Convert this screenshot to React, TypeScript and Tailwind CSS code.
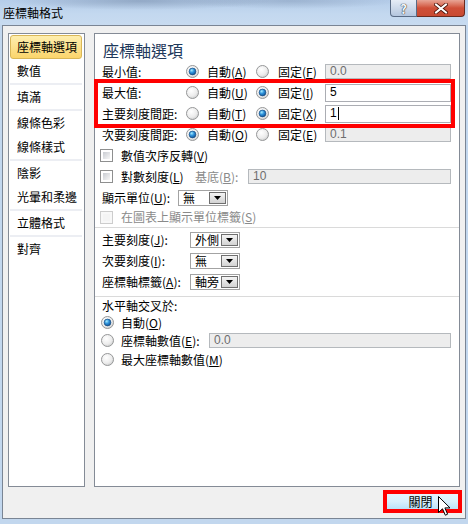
import React from "react";

const K = ({ c }: { c: string }) => (
  <>
    (<span className="underline underline-offset-[1px]">{c}</span>)
  </>
);

const Radio = ({ on }: { on?: boolean }) => (
  <svg width="13" height="13" viewBox="0 0 13 13" className="shrink-0">
    <defs>
      <radialGradient id="rOff" cx="0.4" cy="0.35" r="0.75">
        <stop offset="0" stopColor="#ffffff" />
        <stop offset="0.6" stopColor="#ececec" />
        <stop offset="1" stopColor="#c4c5c6" />
      </radialGradient>
      <radialGradient id="rOn" cx="0.38" cy="0.32" r="0.75">
        <stop offset="0" stopColor="#a6ecff" />
        <stop offset="0.45" stopColor="#2f93dc" />
        <stop offset="1" stopColor="#0c4a8a" />
      </radialGradient>
    </defs>
    <circle cx="6.5" cy="6.5" r="6" fill="url(#rOff)" stroke="#969798" />
    {on && <circle cx="6.5" cy="6.5" r="3.4" fill="url(#rOn)" stroke="#1b4d82" strokeWidth="0.7" />}
  </svg>
);

const Check = ({ disabled }: { disabled?: boolean }) => (
  <span
    className={
      disabled
        ? "flex h-[13px] w-[13px] shrink-0 border border-[#cdcdcd] bg-[#f8f8f8] p-[2px]"
        : "flex h-[13px] w-[13px] shrink-0 border border-[#8e8f8f] bg-white p-[2px]"
    }
  >
    <span
      className={
        disabled ? "flex-1 bg-[#f4f4f4]" : "flex-1 bg-gradient-to-br from-[#c9ccd2] to-[#f7f7f7]"
      }
    />
  </span>
);

const Field = ({ value, w, enabled, caret }: { value: string; w: string; enabled?: boolean; caret?: boolean }) => (
  <div
    className={
      enabled
        ? `flex h-[18px] items-center border border-[#abadb3] bg-white pl-[4px] text-black ${w}`
        : `flex h-[15px] items-center border border-[#b5b9bd] bg-[#ededed] pl-[4px] text-[#6d6d6d] ${w}`
    }
  >
    <span className="font-['Liberation_Sans',sans-serif] text-[12px] leading-[13px]">{value}</span>
    {caret && <span className="ml-px h-[13px] w-px bg-black" />}
  </div>
);

const Combo = ({ text }: { text: string }) => (
  <div className="flex h-[16px] w-[50px] border border-[#a3a3a3] bg-white p-px">
    <span className="flex-1 pl-[3px] leading-[12px]">{text}</span>
    <span className="flex w-[17px] items-center justify-center border border-[#6f6f6f] bg-gradient-to-b from-[#f4f4f4] to-[#d3d3d3]">
      <svg width="7" height="4" viewBox="0 0 7 4">
        <path d="M0 0H7L3.5 4Z" fill="#000" />
      </svg>
    </span>
  </div>
);

const AxisRow = ({
  label,
  a,
  f,
  auto,
  value,
}: {
  label: string;
  a: string;
  f: string;
  auto: boolean;
  value: string;
}) => (
  <div className="flex h-[21px] items-center pl-[7px]">
    <span className="w-[84px] leading-[14px]">{label}</span>
    <span className="flex w-[70px] items-center gap-[8px]">
      <Radio on={auto} />
      <span className="leading-[14px]">
        自動<K c={a} />
      </span>
    </span>
    <span className="flex w-[69px] items-center gap-[9px]">
      <Radio on={!auto} />
      <span className="leading-[14px]">
        固定<K c={f} />
      </span>
    </span>
    <Field value={value} w="w-[126px]" enabled={!auto} caret={value === "1"} />
  </div>
);

const navGroups = [
  ["座標軸選項", "數值"],
  ["填滿"],
  ["線條色彩", "線條樣式"],
  ["陰影", "光暈和柔邊"],
  ["立體格式"],
  ["對齊"],
];

export default function App() {
  return (
    <div className="relative flex h-[524px] w-[468px] flex-col overflow-hidden bg-[#c2d7ee] font-['Noto_Sans_CJK_TC',sans-serif] text-[12px] text-black">
      {/* title bar */}
      <div className="flex h-[25px] justify-between bg-[radial-gradient(ellipse_130px_9px_at_140px_1px,rgba(80,100,130,0.35),transparent),radial-gradient(ellipse_110px_8px_at_290px_1px,rgba(80,100,130,0.25),transparent),linear-gradient(180deg,#b5cdea_0%,#c3d8ef_55%,#c8dbf0_100%)]">
        <span className="pl-[3px] pt-[5px] leading-[15px]">座標軸格式</span>
        <div className="mr-[3px] flex h-[17px]">
          <div className="flex w-[27px] items-center justify-center rounded-bl-[4px] border border-t-0 border-[#596b85] bg-gradient-to-b from-[#e6edf6] to-[#b4c6de] text-[13px] font-bold leading-[13px] text-[#f5f7fa] [text-shadow:0_0_1px_#222,0_0_1px_#222]">
            ?
          </div>
          <div className="flex w-[48px] items-center justify-center rounded-br-[4px] border border-l-0 border-t-0 border-[#6b2a1e] bg-gradient-to-b from-[#e8a596] via-[#cf4f38] to-[#c84a32]">
            <svg width="14" height="11" viewBox="0 0 14 11">
              <path d="M2 1.5L12 9.5M12 1.5L2 9.5" stroke="#4a1208" strokeWidth="3.6" strokeLinecap="square" />
              <path d="M2 1.5L12 9.5M12 1.5L2 9.5" stroke="#ffffff" strokeWidth="2" strokeLinecap="square" />
            </svg>
          </div>
        </div>
      </div>

      {/* client */}
      <div className="ml-[2px] mr-[2px] h-[494px] border border-[#7a8594] bg-[#f0f0f0] px-[5px] pt-[7px]">
        <div className="flex gap-[9px]">
          {/* nav */}
          <div className="h-[454px] w-[77px] border border-[#848b96] bg-white pl-px pr-[2px] pt-px">
            {navGroups.map((g, gi) => (
              <div key={gi}>
                {gi > 0 && <div className="h-[2px] bg-[#eceef3]" />}
                {g.map((item) =>
                  item === "座標軸選項" ? (
                    <div
                      key={item}
                      className="flex h-[24px] items-center rounded-[3px] border border-[#d9b757] bg-gradient-to-b from-[#feeeae] to-[#fbd56b] pl-[6px] leading-[14px]"
                    >
                      {item}
                    </div>
                  ) : (
                    <div key={item} className="flex h-[24px] items-center pl-[7px] leading-[14px]">
                      {item}
                    </div>
                  )
                )}
              </div>
            ))}
          </div>

          {/* options panel */}
          <div className="relative flex h-[454px] w-[366px] flex-col border border-[#848b96] bg-white">
            <div className="h-[27px] pl-[8px] pt-[6px] text-[16px] leading-[20px] text-[#1e395b]">座標軸選項</div>
            <AxisRow label="最小值:" a="A" f="F" auto value="0.0" />
            <AxisRow label="最大值:" a="U" f="I" auto={false} value="5" />
            <AxisRow label="主要刻度間距:" a="T" f="X" auto={false} value="1" />
            <AxisRow label="次要刻度間距:" a="O" f="E" auto value="0.1" />

            <div className="flex h-[21px] items-center pl-[5px]">
              <Check />
              <span className="ml-[8px] leading-[14px]">
                數值次序反轉<K c="V" />
              </span>
            </div>
            <div className="flex h-[21px] items-center pl-[5px]">
              <Check />
              <span className="ml-[8px] w-[74px] leading-[14px]">
                對數刻度<K c="L" />
              </span>
              <span className="w-[53px] leading-[14px] text-[#8a8a8a]">
                基底<K c="B" />:
              </span>
              <Field value="10" w="w-[203px]" />
            </div>
            <div className="flex h-[21px] items-center pl-[7px]">
              <span className="w-[76px] leading-[14px]">
                顯示單位<K c="U" />:
              </span>
              <Combo text="無" />
            </div>
            <div className="flex h-[18px] items-center pl-[5px]">
              <Check disabled />
              <span className="ml-[8px] leading-[14px] text-[#8a8a8a]">
                在圖表上顯示單位標籤<K c="S" />
              </span>
            </div>

            <div className="flex h-[3px] items-center">
              <div className="h-px flex-1 bg-[#dadada]" />
            </div>

            {[
              ["主要刻度", "J", "外側"],
              ["次要刻度", "I", "無"],
              ["座標軸標籤", "A", "軸旁"],
            ].map(([l, k, v]) => (
              <div key={l} className="flex h-[21px] items-center pl-[7px]">
                <span className="w-[88px] leading-[14px]">
                  {l}
                  <K c={k} />:
                </span>
                <Combo text={v} />
              </div>
            ))}

            <div className="flex h-[5px] items-end">
              <div className="h-px flex-1 bg-[#dadada]" />
            </div>

            <div className="flex h-[17px] items-center pl-[7px] leading-[14px]">水平軸交叉於:</div>
            <div className="flex h-[17px] items-center pl-[6px]">
              <Radio on />
              <span className="ml-[7px] leading-[14px]">
                自動<K c="O" />
              </span>
            </div>
            <div className="flex h-[19px] items-center pl-[6px]">
              <Radio />
              <span className="ml-[7px] w-[88px] leading-[14px]">
                座標軸數值<K c="E" />:
              </span>
              <Field value="0.0" w="w-[242px]" />
            </div>
            <div className="flex h-[19px] items-center pl-[6px]">
              <Radio />
              <span className="ml-[7px] leading-[14px]">
                最大座標軸數值<K c="M" />
              </span>
            </div>

            {/* red highlight */}
            <div className="absolute left-[-1px] top-[45px] h-[49px] w-[361px] border-4 border-[#ff0000]" />
          </div>
        </div>

        {/* bottom buttons */}
        <div className="mr-[-2px] flex justify-end pt-[3px]">
          <div className="relative h-[23px] w-[79px]">
            <div className="flex h-full items-center justify-center bg-gradient-to-b from-[#eaf6fd] via-[#d9f0fc] to-[#a9dbf6] pr-[4px] leading-[14px]">
              關閉
            </div>
            <div className="absolute inset-0 border-4 border-[#ff0000]" />
            <svg className="absolute left-[55px] top-[6px]" width="13" height="20" viewBox="0 0 13 20">
              <path
                d="M0.5 0.5V16.5L4.5 12.8L7.3 19.2L9.6 18.2L6.9 11.9H12Z"
                fill="#fff"
                stroke="#000"
                strokeWidth="1"
                strokeLinejoin="miter"
              />
            </svg>
          </div>
        </div>
      </div>
    </div>
  );
}
